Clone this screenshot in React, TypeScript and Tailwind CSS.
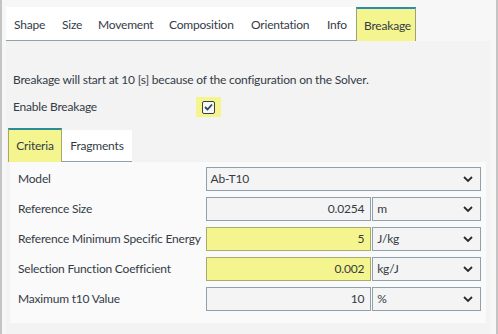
import React from "react";

const tabs = [
  { name: "Shape", w: "w-[48px]" },
  { name: "Size", w: "w-[36px]" },
  { name: "Movement", w: "w-[71px]" },
  { name: "Composition", w: "w-[82px]" },
  { name: "Orientation", w: "w-[76px]" },
  { name: "Info", w: "w-[37px]" },
];

const Chevron = () => (
  <svg width="10" height="6" viewBox="0 0 10 6" className="shrink-0">
    <path d="M1 1 L5 5 L9 1" fill="none" stroke="#2b2b2b" strokeWidth="1.8" />
  </svg>
);

const Select = ({ value, className }: { value: string; className?: string }) => (
  <div
    className={`h-[24px] flex items-center justify-between pl-[4px] pr-[7px] bg-[#f4f4f4] border border-[#8ea1ad] ${className ?? ""}`}
  >
    <span>{value}</span>
    <Chevron />
  </div>
);

const NumInput = ({ value, hl }: { value: string; hl?: boolean }) => (
  <div
    className={`w-[166px] h-[24px] flex items-center justify-end pr-[6px] border ${
      hl ? "bg-[#f5f58f] border-[#a9ab6e]" : "bg-[#f4f4f4] border-[#8ea1ad]"
    }`}
  >
    {value}
  </div>
);

const rows = [
  { label: "Reference Size", value: "0.0254", unit: "m" },
  { label: "Reference Minimum Specific Energy", value: "5", unit: "J/kg", hl: true },
  { label: "Selection Function Coefficient", value: "0.002", unit: "kg/J", hl: true },
  { label: "Maximum t10 Value", value: "10", unit: "%" },
];

export default function App() {
  return (
    <div
      className="w-[498px] h-[334px] bg-[#f7f7f7] border-l-2 border-r-2 border-[#c4c4c4] text-[12px] tracking-[-0.2px] text-[#343b46] flex flex-col pl-[4px] pr-[3px] overflow-hidden whitespace-nowrap"
      style={{ fontFamily: "Lato, 'Noto Sans', sans-serif" }}
    >
      {/* Top tabs */}
      <div className="flex pt-[7px] h-[41px]">
        <div className="flex bg-white border-b border-[#8ea1ad]">
          {tabs.map((t) => (
            <div key={t.name} className={`${t.w} pl-[8px] pt-[2px] flex items-center`}>
              {t.name}
            </div>
          ))}
        </div>
        <div className="w-[60px] pl-[7px] pt-[1px] flex items-center bg-[#f5f58f] border-t-[2px] border-t-[#2b8bb5] border-x border-x-[#9ba178]">
          Breakage
        </div>
      </div>

      {/* Content */}
      <div className="flex-1 bg-[#f3f3f3] mr-[2px] pt-[30px] pl-[7px] pr-[5px] flex flex-col">
        <div className="h-[18px] leading-[18px]">
          Breakage will start at 10 [s] because of the configuration on the Solver.
        </div>
        <div className="flex items-center h-[20px] mt-[8px]">
          <span className="w-[183px]">Enable Breakage</span>
          <div className="w-[25px] h-[20px] bg-[#f5f58f] flex items-center justify-center">
            <div className="w-[13px] h-[13px] border-[1.5px] border-[#3a3f48] rounded-[2px] bg-[#f7f7f3] flex items-center justify-center">
              <svg width="9" height="8" viewBox="0 0 9 8">
                <path d="M1 4 L3.5 6.5 L8 1.5" fill="none" stroke="#26476e" strokeWidth="1.8" />
              </svg>
            </div>
          </div>
        </div>

        {/* Sub tabs */}
        <div className="flex mt-[11px] -ml-[5px] h-[34px] items-end">
          <div className="h-[34px] w-[54px] flex items-center justify-center bg-[#f5f58f] border-t-[2px] border-t-[#2a8c96] border-x border-x-[#a3a86c]">
            Criteria
          </div>
          <div className="h-[32px] w-[70px] flex items-center justify-center bg-white border-b border-[#8ea1ad]">
            Fragments
          </div>
        </div>

        {/* Properties table */}
        <div className="bg-[#fafafa] -ml-[3px] pl-[8px] pr-[5px] pt-[5px] pb-[12px] flex flex-col gap-[6px]">
          <div className="flex items-center h-[24px]">
            <span className="w-[188px]">Model</span>
            <Select value="Ab-T10" className="w-[276px]" />
          </div>
          {rows.map((r) => (
            <div key={r.label} className="flex items-center h-[24px]">
              <span className="w-[188px]">{r.label}</span>
              <NumInput value={r.value} hl={r.hl} />
              <Select value={r.unit} className="w-[109px] ml-[1px]" />
            </div>
          ))}
        </div>
      </div>
    </div>
  );
}
